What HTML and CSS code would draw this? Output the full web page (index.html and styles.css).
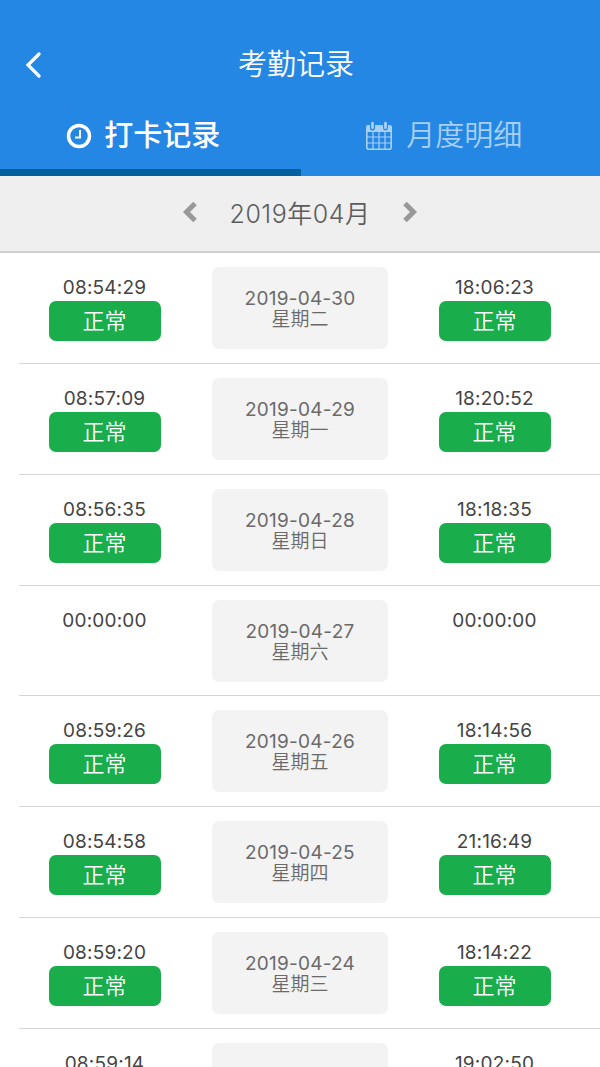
FILE: index.html
```html
<!DOCTYPE html>
<html lang="zh-CN">
<head>
  <meta charset="UTF-8">
  <meta name="viewport" content="width=device-width, initial-scale=1.0">
  <title>考勤记录</title>
  <link rel="stylesheet" href="styles.css">
</head>
<body>

  <!-- 顶部 -->
  <header class="header">
    <div class="navbar">
      <svg class="back" width="16" height="26" viewBox="0 0 16 26"><path d="M14 2 3 13l11 11"/></svg>
      <h1 class="title">考勤记录</h1>
    </div>
    <nav class="tabs">
      <a class="tab active">
        <svg class="clock" width="26" height="26" viewBox="0 0 26 26"><circle cx="13" cy="13" r="10.5"/><path class="hand" d="M14 7v7.500H9"/></svg>
        <span>打卡记录</span>
      </a>
      <a class="tab">
        <svg class="calendar" width="28" height="30" viewBox="0 0 28 30">
          <path class="frame" d="M3 4h2v3a2.500 2.500 0 0 0 5 0V4h8v3a2.500 2.500 0 0 0 5 0V4h2a2 2 0 0 1 2 2v5H1V6a2 2 0 0 1 2-2z"/>
          <path d="M1.800 10v16.200q0 2 2 2h20.400q2 0 2-2V10"/>
          <path class="grid" d="M2 16h24M2 22h24M8 11v17M14 11v17M20 11v17"/>
          <path class="ring" d="M7.500 2.200v4.500M20.500 2.200v4.500"/>
        </svg>
        <span>月度明细</span>
      </a>
    </nav>
  </header>

  <!-- 月份切换 -->
  <div class="month">
    <svg class="arrow" width="14" height="22" viewBox="0 0 14 22"><path d="M12 2.500 3.500 11l8.500 8.500"/></svg>
    <span class="month-text">2019年04月</span>
    <svg class="arrow" width="14" height="22" viewBox="0 0 14 22"><path d="M2 2.500l8.500 8.500L2 19.500"/></svg>
  </div>

  <!-- 打卡列表 -->
  <ul class="list">
    <li class="row">
      <div class="punch"><span class="time">08:54:29</span><span class="status">正常</span></div>
      <div class="day"><span class="date">2019-04-30</span><span class="week">星期二</span></div>
      <div class="punch"><span class="time">18:06:23</span><span class="status">正常</span></div>
    </li>
    <li class="row">
      <div class="punch"><span class="time">08:57:09</span><span class="status">正常</span></div>
      <div class="day"><span class="date">2019-04-29</span><span class="week">星期一</span></div>
      <div class="punch"><span class="time">18:20:52</span><span class="status">正常</span></div>
    </li>
    <li class="row">
      <div class="punch"><span class="time">08:56:35</span><span class="status">正常</span></div>
      <div class="day"><span class="date">2019-04-28</span><span class="week">星期日</span></div>
      <div class="punch"><span class="time">18:18:35</span><span class="status">正常</span></div>
    </li>
    <li class="row">
      <div class="punch"><span class="time">00:00:00</span></div>
      <div class="day"><span class="date">2019-04-27</span><span class="week">星期六</span></div>
      <div class="punch"><span class="time">00:00:00</span></div>
    </li>
    <li class="row">
      <div class="punch"><span class="time">08:59:26</span><span class="status">正常</span></div>
      <div class="day"><span class="date">2019-04-26</span><span class="week">星期五</span></div>
      <div class="punch"><span class="time">18:14:56</span><span class="status">正常</span></div>
    </li>
    <li class="row">
      <div class="punch"><span class="time">08:54:58</span><span class="status">正常</span></div>
      <div class="day"><span class="date">2019-04-25</span><span class="week">星期四</span></div>
      <div class="punch"><span class="time">21:16:49</span><span class="status">正常</span></div>
    </li>
    <li class="row">
      <div class="punch"><span class="time">08:59:20</span><span class="status">正常</span></div>
      <div class="day"><span class="date">2019-04-24</span><span class="week">星期三</span></div>
      <div class="punch"><span class="time">18:14:22</span><span class="status">正常</span></div>
    </li>
    <li class="row">
      <div class="punch"><span class="time">08:59:14</span></div>
      <div class="day"></div>
      <div class="punch"><span class="time">19:02:50</span></div>
    </li>
  </ul>

</body>
</html>
```
FILE: styles.css
```css
* {
  box-sizing: border-box;
}
body {
  margin: 0;
  height: 1067px;
  display: flex;
  flex-direction: column;
  overflow: hidden;
  background-color: #fff;
  font-family: Inter, "Noto Sans CJK SC", sans-serif;
  font-weight: 350;
  color: #444;
}
svg {
  fill: none;
  stroke: currentColor;
  flex-shrink: 0;
}
.header {
  height: 176px;
  flex-shrink: 0;
  padding-top: 34px;
  background-color: #2487e4;
  color: #fff;
}
.navbar {
  height: 62px;
  display: grid;
  grid-template-columns: 56px 1fr 60px;
  align-items: center;
}
.back {
  margin-left: 25px;
  stroke-width: 3.2;
  stroke-linecap: round;
}
.title {
  margin: 0 0 0 -4px;
  text-align: center;
  font-size: 29px;
  line-height: 40px;
  font-weight: 350;
}
.tabs {
  display: flex;
  height: 80px;
}
.tab {
  flex: 1;
  display: flex;
  align-items: center;
  justify-content: center;
  gap: 13px;
  padding: 7px 13px 0 0;
  border-bottom: 7px solid transparent;
  font-size: 29px;
  line-height: 40px;
  color: #a8cff4;
}
.tab.active {
  gap: 12px;
  padding-right: 14px;
  border-color: #0360a0;
  font-weight: 500;
  color: #fff;
}
.clock {
  stroke-width: 3.5;
}
.hand {
  stroke-width: 2;
}
.calendar {
  stroke-width: 1.6;
}
.frame {
  fill: currentColor;
  stroke: none;
}
.grid {
  stroke-width: 1.2;
}
.ring {
  stroke-width: 2.8;
  stroke-linecap: round;
}
.month {
  height: 77px;
  flex-shrink: 0;
  display: flex;
  align-items: center;
  justify-content: center;
  gap: 33px;
  padding-bottom: 3px;
  background-color: #efefef;
  border-bottom: 2px solid #d0d0d0;
}
.month-text {
  font-size: 25px;
  letter-spacing: 0.5px;
  color: #5c5c5c;
}
.arrow {
  color: #999;
  stroke-width: 5;
}
.list {
  list-style: none;
  margin: 0;
  padding: 0 0 0 19px;
}
.row {
  height: 110.85px;
  display: grid;
  grid-template-columns: 171px 176px 169px;
  column-gap: 22px;
  padding-top: 14px;
  border-bottom: 1px solid #d5d5d5;
}
.punch {
  display: flex;
  flex-direction: column;
  align-items: center;
  padding-top: 8px;
}
.time {
  font-size: 19px;
  font-weight: 400;
  line-height: 26px;
  letter-spacing: 0.2px;
}
.status {
  width: 112px;
  height: 40px;
  border-radius: 7px;
  background-color: #19ad4b;
  color: #fff;
  text-align: center;
  font-size: 22px;
  line-height: 41px;
}
.day {
  height: 82px;
  display: flex;
  flex-direction: column;
  align-items: center;
  justify-content: center;
  padding-top: 2px;
  border-radius: 7px;
  background-color: #f3f3f3;
  color: #6a6a6a;
  font-size: 19px;
  line-height: 21px;
}
.date {
  font-weight: 400;
  letter-spacing: 0.25px;
}
```
